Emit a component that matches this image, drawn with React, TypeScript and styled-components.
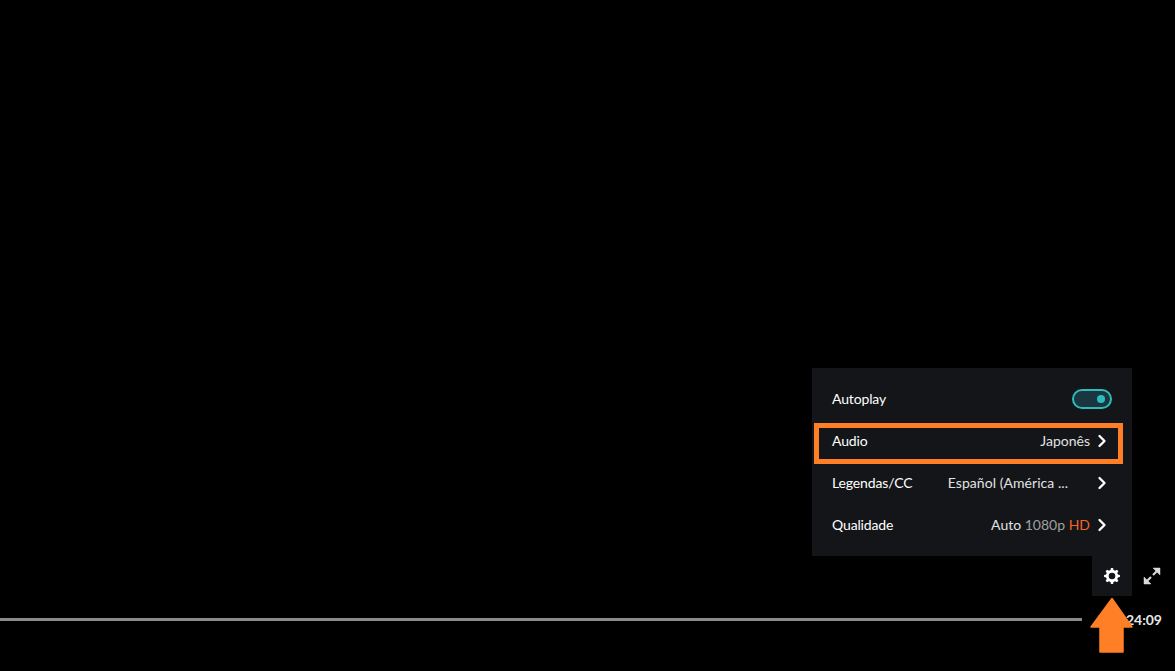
import React from "react";
import styled, { createGlobalStyle } from "styled-components";
import { ChevronRight } from "lucide-react";

const Global = createGlobalStyle`
  html, body { margin: 0; padding: 0; background: #000; }
  body { font-family: Lato, "Liberation Sans", sans-serif; overflow: hidden; }
`;

const Page = styled.div`
  position: relative;
  width: 1175px;
  height: 671px;
  background: #000;
  display: flex;
  flex-direction: column;
  justify-content: flex-end;
`;

const Stage = styled.div`
  display: flex;
  flex-direction: column;
  align-items: flex-end;
  padding-right: 3px;
`;

const Menu = styled.div`
  width: 320px;
  margin-right: 40px;
  padding: 10px 0;
  background: #141519;
`;

const Row = styled.div`
  height: 42px;
  padding: 0 20px;
  display: flex;
  align-items: center;
  justify-content: space-between;
  color: #fff;
  font-size: 14px;
  box-sizing: border-box;
`;

const Label = styled.span`
  padding-bottom: 2px;
  letter-spacing: -0.01em;
`;

const RowValue = styled.div`
  display: flex;
  align-items: center;
  gap: 2px;
`;

const ValueText = styled.span`
  color: #e2e2e2;
  padding-bottom: 2px;
`;

const TruncatedValue = styled(ValueText)`
  margin-right: 22px;
  letter-spacing: 0.05px;
`;

const Muted = styled.span`
  color: #a0a0a0;
`;

const Hd = styled.span`
  color: #f1662a;
`;

const Chevron = styled(ChevronRight)`
  width: 20px;
  height: 20px;
  color: #fff;
  stroke-width: 2.8;
`;

const Toggle = styled.div`
  width: 40px;
  height: 20px;
  box-sizing: border-box;
  border: 2px solid #2abdbb;
  border-radius: 10px;
  background: #1b3640;
  display: flex;
  align-items: center;
  justify-content: flex-end;
  padding-right: 5px;
`;

const Knob = styled.span`
  width: 8px;
  height: 8px;
  border-radius: 50%;
  background: #2abdbb;
`;

const Controls = styled.div`
  display: flex;
`;

const GearButton = styled.div`
  width: 40px;
  height: 40px;
  background: #141519;
  color: #fff;
  display: flex;
  align-items: center;
  justify-content: center;
`;

const ExpandButton = styled.div`
  width: 40px;
  height: 40px;
  color: #dadada;
  display: flex;
  align-items: center;
  justify-content: center;
`;

const Timeline = styled.div`
  height: 47px;
  margin-bottom: 28px;
  padding-right: 13px;
  display: flex;
  align-items: center;
  justify-content: space-between;
`;

const Track = styled.div`
  width: 1082px;
  height: 3px;
  background: #8a8a8a;
`;

const Time = styled.span`
  color: #e6e6e6;
  font-size: 14px;
  font-weight: 700;
  padding-bottom: 1px;
`;

const Highlight = styled.div`
  position: absolute;
  left: 814px;
  top: 423px;
  width: 309px;
  height: 41px;
  box-sizing: border-box;
  border: 5px solid #ff7f27;
`;

const Arrow = styled.svg`
  position: absolute;
  left: 1090px;
  top: 597px;
  width: 44px;
  height: 57px;
`;

function gearPath(): string {
  const teeth = 8;
  const pts: string[] = [];
  for (let i = 0; i < teeth; i++) {
    const a = (i / teeth) * Math.PI * 2 - Math.PI / 2;
    const step = (Math.PI * 2) / teeth;
    const seq: [number, number][] = [
      [6.1, a - step * 0.32],
      [8, a - step * 0.17],
      [8, a + step * 0.17],
      [6.1, a + step * 0.32],
    ];
    for (const [r, t] of seq) {
      pts.push(`${(8 + r * Math.cos(t)).toFixed(2)} ${(8 + r * Math.sin(t)).toFixed(2)}`);
    }
  }
  const hole = "M8 4.7a3.3 3.3 0 1 0 0 6.6a3.3 3.3 0 1 0 0-6.6Z";
  return `M${pts.join("L")}Z${hole}`;
}

const GEAR = gearPath();

export default function App() {
  return (
    <Page>
      <Global />
      <Stage>
        <Menu>
          <Row>
            <Label>Autoplay</Label>
            <Toggle>
              <Knob />
            </Toggle>
          </Row>
          <Row>
            <Label>Audio</Label>
            <RowValue>
              <ValueText>Japonês</ValueText>
              <Chevron />
            </RowValue>
          </Row>
          <Row>
            <Label>Legendas/CC</Label>
            <RowValue>
              <TruncatedValue>Español (América ...</TruncatedValue>
              <Chevron />
            </RowValue>
          </Row>
          <Row>
            <Label>Qualidade</Label>
            <RowValue>
              <ValueText>
                Auto <Muted>1080p</Muted> <Hd>HD</Hd>
              </ValueText>
              <Chevron />
            </RowValue>
          </Row>
        </Menu>
        <Controls>
          <GearButton>
            <svg width="16" height="16" viewBox="0 0 16 16">
              <path d={GEAR} fill="currentColor" fillRule="evenodd" />
            </svg>
          </GearButton>
          <ExpandButton>
            <svg width="18" height="18" viewBox="0 0 18 18" fill="currentColor" stroke="currentColor">
              <path d="M17 1v7l-7-7Z" strokeWidth="0.5" strokeLinejoin="round" />
              <path d="M1 17v-7l7 7Z" strokeWidth="0.5" strokeLinejoin="round" />
              <path d="M14 4l-4 4M4 14l4-4" strokeWidth="2" fill="none" />
            </svg>
          </ExpandButton>
        </Controls>
      </Stage>
      <Timeline>
        <Track />
        <Time>24:09</Time>
      </Timeline>
      <Highlight />
      <Arrow viewBox="0 0 44 57">
        <path
          d="M22 1.5 L42 30 L33 30 L33 55 L10 55 L10 30 L1 30 Z"
          fill="#ff7f27"
          stroke="#ff7f27"
          strokeWidth="1.5"
          strokeLinejoin="round"
        />
      </Arrow>
    </Page>
  );
}
